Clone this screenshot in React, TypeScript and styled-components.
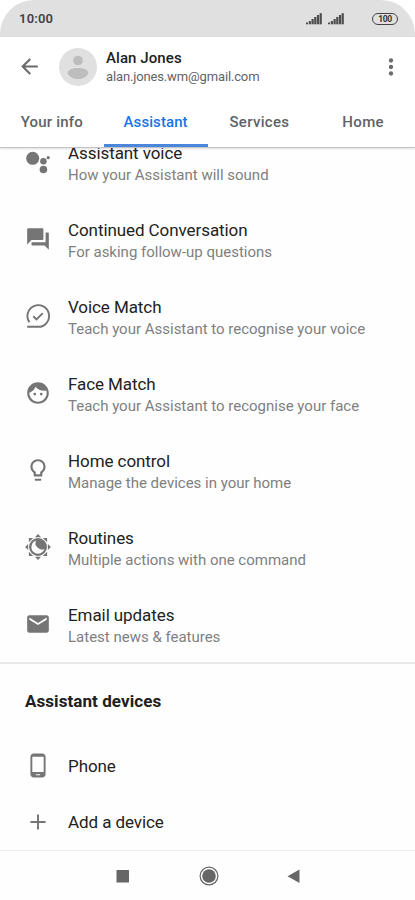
import React from "react";
import styled, { createGlobalStyle } from "styled-components";

const Global = createGlobalStyle`
  * { box-sizing: border-box; }
  html, body { margin: 0; padding: 0; background: #fff; }
  body { font-family: Roboto, "Liberation Sans", sans-serif; overflow: hidden; }
`;

const Screen = styled.div`
  width: 415px;
  height: 900px;
  display: flex;
  flex-direction: column;
  background: #fefefe;
  overflow: hidden;
`;

const StatusBackdrop = styled.div`
  background: #fff;
  flex: none;
`;

const StatusBar = styled.div`
  height: 37px;
  display: flex;
  align-items: center;
  padding: 0 17px 0 19px;
  background: #e0e0e0;
  border-radius: 34px 34px 0 0;
`;

const Clock = styled.span`
  flex: 1;
  font-size: 13px;
  line-height: 16px;
  font-weight: 600;
  letter-spacing: 0.2px;
  color: #434343;
  padding-top: 1px;
`;

const Signals = styled.div`
  display: flex;
  gap: 6px;
  margin-right: 28px;
`;

const Battery = styled.div`
  width: 26px;
  height: 12px;
  border: 1px solid #444;
  border-radius: 6px;
  font-size: 8.5px;
  line-height: 10px;
  font-weight: 700;
  letter-spacing: -0.3px;
  text-align: center;
  color: #333;
`;

const Header = styled.header`
  flex: none;
  height: 111px;
  background: #fff;
  border-bottom: 1px solid #c4c4c4;
  box-shadow: 0 1px 2px rgba(0, 0, 0, 0.12);
  z-index: 1;
`;

const Account = styled.div`
  height: 59px;
  display: flex;
  align-items: center;
  padding: 0 11px 0 17px;
`;

const Avatar = styled.div`
  width: 38px;
  height: 38px;
  margin: 0 9px 0 17px;
  border-radius: 50%;
  background: #e0e0e0;
`;

const Identity = styled.div`
  flex: 1;
  padding-top: 2px;
`;

const Name = styled.div`
  font-size: 15px;
  line-height: 19px;
  font-weight: 500;
  letter-spacing: 0.08px;
  color: #202124;
`;

const Email = styled.div`
  font-size: 13px;
  line-height: 18px;
  letter-spacing: -0.14px;
  color: #5f6368;
`;

const MenuDots = styled.div`
  display: flex;
  color: #6b6b6b;
`;

const Tabs = styled.nav`
  height: 51px;
  display: grid;
  grid-template-columns: repeat(4, 1fr);
`;

const Tab = styled.div<{ $active?: boolean; $ls: number }>`
  display: flex;
  align-items: center;
  justify-content: center;
  padding-top: 3px;
  font-size: 15px;
  font-weight: 500;
  letter-spacing: ${(p) => p.$ls}px;
  color: ${(p) => (p.$active ? "#1a73e8" : "#5f6368")};
  border-bottom: 3px solid ${(p) => (p.$active ? "#4a86dc" : "transparent")};
`;

const Content = styled.main`
  flex: 1;
  min-height: 0;
  overflow: hidden;
`;

const Settings = styled.section`
  margin-top: -25px;
  height: 541px;
  border-bottom: 2px solid #e8e8e8;
`;

const Row = styled.div<{ $h: number }>`
  height: ${(p) => p.$h}px;
  display: flex;
  align-items: center;
  padding-left: 25px;
`;

const Labels = styled.div`
  padding-top: 6px;
`;

const IconSlot = styled.div`
  width: 26px;
  margin-right: 17px;
  display: flex;
  color: #757575;
`;

const Title = styled.div`
  font-size: 17px;
  line-height: 21px;
  letter-spacing: -0.08px;
  color: #222;
`;

const Detail = styled.div`
  font-size: 15px;
  line-height: 22px;
  letter-spacing: -0.005px;
  color: #808080;
`;

const SectionTitle = styled.h2`
  margin: 0;
  height: 74px;
  padding: 0 0 0 25px;
  display: flex;
  align-items: center;
  font-size: 17px;
  font-weight: 700;
  letter-spacing: 0.07px;
  color: #202020;
`;

const NavBar = styled.footer`
  flex: none;
  height: 50px;
  display: flex;
  align-items: center;
  justify-content: center;
  gap: 65px;
  padding-left: 2px;
  border-top: 1px solid #eee;
  color: #666;
`;

const Svg = ({ children, size = 26 }: { children: React.ReactNode; size?: number }) => (
  <svg width={size} height={size} viewBox="0 0 24 24" fill="currentColor">
    {children}
  </svg>
);

const Signal = () => (
  <svg width="16" height="12" viewBox="0 0 16 12" fill="#4d4d4d">
    <rect x="0" y="9.5" width="2" height="1.8" />
    <rect x="2.8" y="8" width="2.1" height="3.3" />
    <rect x="5.5" y="6" width="2.2" height="5.3" />
    <rect x="8.2" y="4" width="2.2" height="7.3" />
    <rect x="10.9" y="2" width="2.2" height="9.3" />
    <rect x="13.6" y="0.2" width="2.2" height="11.1" />
  </svg>
);

const icons = {
  assistant: (
    <>
      <circle cx="7.1" cy="8.6" r="6" />
      <circle cx="17" cy="11.4" r="3" />
      <circle cx="17" cy="18.9" r="3.5" />
      <circle cx="21.4" cy="8" r="1.5" />
    </>
  ),
  chat: (
    <path d="M21 6h-2v9H6v2c0 .55.45 1 1 1h11l4 4V7c0-.55-.45-1-1-1zm-4 6V3c0-.55-.45-1-1-1H3c-.55 0-1 .45-1 1v14l4-4h10c.55 0 1-.45 1-1z" />
  ),
  voice: (
    <g fill="none" stroke="currentColor" strokeWidth="1.8">
      <path d="M4.1 17.8A10 10 0 1 1 12 22H2" />
      <path d="M7.6 12.2l3 2.9 5.800-5.800" />
    </g>
  ),
  face: (
    <path d="M10.25 13a1.25 1.25 0 1 1-2.5 0 1.25 1.25 0 0 1 2.5 0zM15 11.75a1.25 1.25 0 1 0 0 2.5 1.25 1.25 0 0 0 0-2.5zm7 .25c0 5.52-4.48 10-10 10S2 17.52 2 12 6.48 2 12 2s10 4.48 10 10zm-2 0c0-.78-.12-1.53-.33-2.24-.7.15-1.42.24-2.17.24-3.13 0-5.92-1.44-7.76-3.69C8.69 8.87 6.6 10.88 4 11.86c.01.04 0 .09 0 .14 0 4.41 3.59 8 8 8s8-3.59 8-8z" />
  ),
  bulb: (
    <path d="M9 21c0 .5.4 1 1 1h4c.6 0 1-.5 1-1v-1H9v1zm3-19C8.1 2 5 5.1 5 9c0 2.4 1.2 4.5 3 5.7V17c0 .5.4 1 1 1h6c.6 0 1-.5 1-1v-2.3c1.8-1.3 3-3.4 3-5.7 0-3.9-3.1-7-7-7zm2.9 11.1l-.9.6V16h-4v-2.3l-.9-.6C7.8 12.2 7 10.6 7 9c0-2.8 2.2-5 5-5s5 2.2 5 5c0 1.600-.8 3.200-2.100 4.100z" />
  ),
  routines: (
    <>
      <circle cx="12" cy="12" r="7.2" fill="none" stroke="currentColor" strokeWidth="2.1" />
      <path d="M10.800 4.800A7.250 7.250 0 0 1 19.200 13.200A6.050 6.050 0 0 1 10.800 4.800z" />
      {[0, 45, 90, 135, 180, 225, 270, 315].map((a) => (
        <path key={a} d="M12 .1l2.8 2.800h-5.600z" transform={`rotate(${a} 12 12)`} />
      ))}
    </>
  ),
  mail: (
    <path d="M20 4H4c-1.1 0-2 .9-2 2v12c0 1.1.9 2 2 2h16c1.1 0 2-.9 2-2V6c0-1.1-.9-2-2-2zm0 4l-8 5-8-5V6l8 5 8-5v2z" />
  ),
  phone: (
    <path d="M16 .5H8C6.34.5 5 1.84 5 3.500v16c0 1.660 1.340 3 3 3h8c1.660 0 3-1.340 3-3v-16c0-1.660-1.340-3-3-3zm-2 20h-4v-1h4v1zm3.250-3H6.750v-14h10.500v14z" />
  ),
  plus: <path d="M19 12.9h-6.1V19h-1.8v-6.1H5v-1.8h6.1V5h1.8v6.1H19z" />,
};

type IconName = keyof typeof icons;

const settings: { icon: IconName; title: string; detail: string }[] = [
  { icon: "assistant", title: "Assistant voice", detail: "How your Assistant will sound" },
  { icon: "chat", title: "Continued Conversation", detail: "For asking follow-up questions" },
  { icon: "voice", title: "Voice Match", detail: "Teach your Assistant to recognise your voice" },
  { icon: "face", title: "Face Match", detail: "Teach your Assistant to recognise your face" },
  { icon: "bulb", title: "Home control", detail: "Manage the devices in your home" },
  { icon: "routines", title: "Routines", detail: "Multiple actions with one command" },
  { icon: "mail", title: "Email updates", detail: "Latest news & features" },
];

export default function App() {
  return (
    <Screen>
      <Global />
      <StatusBackdrop>
        <StatusBar>
          <Clock>10:00</Clock>
          <Signals>
            <Signal />
            <Signal />
          </Signals>
          <Battery>100</Battery>
        </StatusBar>
      </StatusBackdrop>
      <Header>
        <Account>
          <svg width="25" height="25" viewBox="0 0 24 24" fill="#6b6b6b">
            <path d="M20 11H7.83l5.59-5.59L12 4l-8 8 8 8 1.41-1.41L7.83 13H20v-2z" />
          </svg>
          <Avatar>
            <svg width="38" height="38" viewBox="0 0 38 38" fill="#bdbdbd">
              <circle cx="19" cy="12.5" r="4.8" />
              <path d="M8.7 25.3C8.7 18.3 29.3 18.3 29.3 25.3C26.5 33 11.5 33 8.7 25.3z" />
            </svg>
          </Avatar>
          <Identity>
            <Name>Alan Jones</Name>
            <Email>alan.jones.wm@gmail.com</Email>
          </Identity>
          <MenuDots>
            <Svg>
              <circle cx="12" cy="6" r="2" />
              <circle cx="12" cy="12" r="2" />
              <circle cx="12" cy="18" r="2" />
            </Svg>
          </MenuDots>
        </Account>
        <Tabs>
          <Tab $ls={0.2}>Your info</Tab>
          <Tab $active $ls={0.08}>Assistant</Tab>
          <Tab $ls={0.3}>Services</Tab>
          <Tab $ls={0.4}>Home</Tab>
        </Tabs>
      </Header>
      <Content>
        <Settings>
          {settings.map((s) => (
            <Row key={s.title} $h={77}>
              <IconSlot>
                <Svg>{icons[s.icon]}</Svg>
              </IconSlot>
              <Labels>
                <Title>{s.title}</Title>
                <Detail>{s.detail}</Detail>
              </Labels>
            </Row>
          ))}
        </Settings>
        <SectionTitle>Assistant devices</SectionTitle>
        <Row $h={56}>
          <IconSlot>
            <Svg>{icons.phone}</Svg>
          </IconSlot>
          <Title>Phone</Title>
        </Row>
        <Row $h={56}>
          <IconSlot>
            <Svg>{icons.plus}</Svg>
          </IconSlot>
          <Title>Add a device</Title>
        </Row>
      </Content>
      <NavBar>
        <svg width="20" height="20" fill="currentColor">
          <rect x="2.5" y="4" width="12.5" height="12.5" rx="0.5" />
        </svg>
        <svg width="20" height="20" viewBox="0 0 20 20" fill="currentColor">
          <circle cx="10" cy="10" r="8.9" fill="none" stroke="currentColor" strokeWidth="1.2" />
          <circle cx="10" cy="10" r="6.8" />
        </svg>
        <svg width="20" height="20" fill="currentColor">
          <path d="M3.5 10.3L15.500 3.500v13.600z" />
        </svg>
      </NavBar>
    </Screen>
  );
}
